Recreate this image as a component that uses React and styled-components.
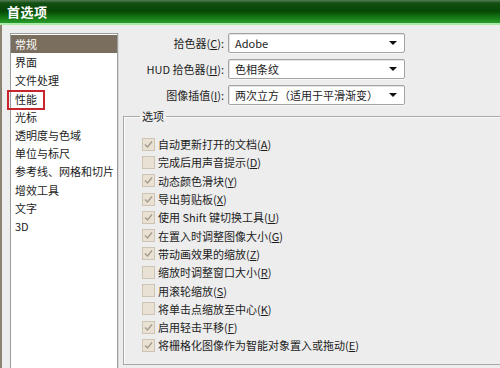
import React from "react";
import styled, { createGlobalStyle } from "styled-components";

const GlobalStyle = createGlobalStyle`
  html, body {
    margin: 0;
    padding: 0;
    width: 500px;
    height: 368px;
    overflow: hidden;
    background: #ededed;
  }
  body {
    font-family: "Noto Sans CJK SC", "Liberation Sans", sans-serif;
    font-size: 11px;
    color: #1c1c1c;
  }
`;

const Window = styled.div`
  width: 500px;
  height: 368px;
  display: flex;
  flex-direction: column;
  overflow: hidden;
`;

const TitleBar = styled.div`
  height: 23px;
  flex: none;
  display: flex;
  align-items: center;
  padding-left: 7px;
  color: #fff;
  font-size: 13px;
  font-weight: bold;
  letter-spacing: 0.5px;
  background: linear-gradient(
    to bottom,
    #557d55 0,
    #134f13 3px,
    #064706 11px,
    #137513 17px,
    #2a9c2a 23px
  );
  border-bottom: 2px solid #a9eaa6;
`;

const Body = styled.div`
  flex: 1;
  display: flex;
  border-left: 2px solid #8c8272;
  min-height: 0;
`;

const SideList = styled.ul`
  list-style: none;
  margin: 8px 0 0 8px;
  padding: 1px 0 0;
  width: 106px;
  flex: none;
  background: #fff;
  border: 1px solid #9c9c9c;
  border-bottom: none;
  box-shadow: 1px 0 0 #d8d8d8;
`;

const SideItem = styled.li`
  position: relative;
  height: 18.2px;
  line-height: 18px;
  padding-left: 4px;
  white-space: nowrap;
  background: ${(p) => (p.$active ? "#7a6e5e" : "transparent")};
  color: ${(p) => (p.$active ? "#fff" : "#1c1c1c")};
`;

const Highlight = styled.span`
  position: absolute;
  left: -4px;
  top: 0;
  width: 34px;
  height: 16px;
  border: 2px solid #c8262c;
`;

const Main = styled.div`
  flex: 1;
  display: flex;
  flex-direction: column;
  padding: 8px 0 0 5px;
  min-width: 0;
`;

const Form = styled.div`
  display: grid;
  grid-template-columns: 101px 177px;
  column-gap: 4px;
  row-gap: 6px;
  align-items: center;
`;

const Label = styled.label`
  text-align: right;
  white-space: nowrap;
  line-height: 20px;
`;

const Select = styled.div`
  height: 18px;
  display: flex;
  align-items: center;
  justify-content: space-between;
  padding: 0 6px 0 6px;
  background: #fff;
  border: 1px solid #a3a3a3;
  border-radius: 2px;
  box-shadow: inset 1px 1px 0 #e4e4e4, 0 1px 0 #f8f8f8;
  white-space: nowrap;
`;

const Arrow = styled.span`
  width: 0;
  height: 0;
  border-left: 4px solid transparent;
  border-right: 4px solid transparent;
  border-top: 4px solid #111;
  margin-right: 1px;
`;

const Group = styled.fieldset`
  margin: 4px 0 0 0;
  width: 420px;
  padding: 0 0 9px 16px;
  border: 1px solid #a9a9a9;
  border-right: none;
  box-shadow: inset 1px 1px 0 #fbfbfb;
  min-width: 0;
  flex: none;
`;

const Legend = styled.legend`
  padding: 0 2px;
  line-height: 14px;
`;

const Options = styled.div`
  display: flex;
  flex-direction: column;
  padding: 12px 0 0 2px;
`;

const Option = styled.div`
  height: 18.3px;
  display: flex;
  align-items: center;
  gap: 3px;
  white-space: nowrap;
`;

const Box = styled.span`
  width: 11px;
  height: 11px;
  flex: none;
  display: flex;
  align-items: center;
  justify-content: center;
  background: #e8e1d4;
  border: 1px solid #cdc4b4;
`;

const sideItems = [
  "常规",
  "界面",
  "文件处理",
  "性能",
  "光标",
  "透明度与色域",
  "单位与标尺",
  "参考线、网格和切片",
  "增效工具",
  "文字",
  "3D",
];

const fields = [
  { label: "拾色器", key: "C", value: "Adobe" },
  { label: "HUD 拾色器", key: "H", value: "色相条纹" },
  { label: "图像插值", key: "I", value: "两次立方（适用于平滑渐变）" },
];

const options = [
  { text: "自动更新打开的文档", key: "A", on: true },
  { text: "完成后用声音提示", key: "D", on: false },
  { text: "动态颜色滑块", key: "Y", on: true },
  { text: "导出剪贴板", key: "X", on: true },
  { text: "使用 Shift 键切换工具", key: "U", on: true },
  { text: "在置入时调整图像大小", key: "G", on: true },
  { text: "带动画效果的缩放", key: "Z", on: true },
  { text: "缩放时调整窗口大小", key: "R", on: false },
  { text: "用滚轮缩放", key: "S", on: false },
  { text: "将单击点缩放至中心", key: "K", on: false },
  { text: "启用轻击平移", key: "F", on: true },
  { text: "将栅格化图像作为智能对象置入或拖动", key: "E", on: true },
];

const Check = () => (
  <svg width="9" height="9" viewBox="0 0 9 9">
    <path d="M1 4.5 L3.5 7 L8 1.5" fill="none" stroke="#a59b8a" strokeWidth="1.4" />
  </svg>
);

export default function App() {
  return (
    <Window>
      <GlobalStyle />
      <TitleBar>首选项</TitleBar>
      <Body>
        <SideList>
          {sideItems.map((name, i) => (
            <SideItem key={name} $active={i === 0}>
              {name}
              {name === "性能" && <Highlight />}
            </SideItem>
          ))}
        </SideList>
        <Main>
          <Form>
            {fields.map((f) => (
              <React.Fragment key={f.key}>
                <Label>
                  {f.label}(<u>{f.key}</u>):
                </Label>
                <Select>
                  <span>{f.value}</span>
                  <Arrow />
                </Select>
              </React.Fragment>
            ))}
          </Form>
          <Group>
            <Legend>选项</Legend>
            <Options>
              {options.map((o) => (
                <Option key={o.key}>
                  <Box>{o.on && <Check />}</Box>
                  <span>
                    {o.text}(<u>{o.key}</u>)
                  </span>
                </Option>
              ))}
            </Options>
          </Group>
        </Main>
      </Body>
    </Window>
  );
}
